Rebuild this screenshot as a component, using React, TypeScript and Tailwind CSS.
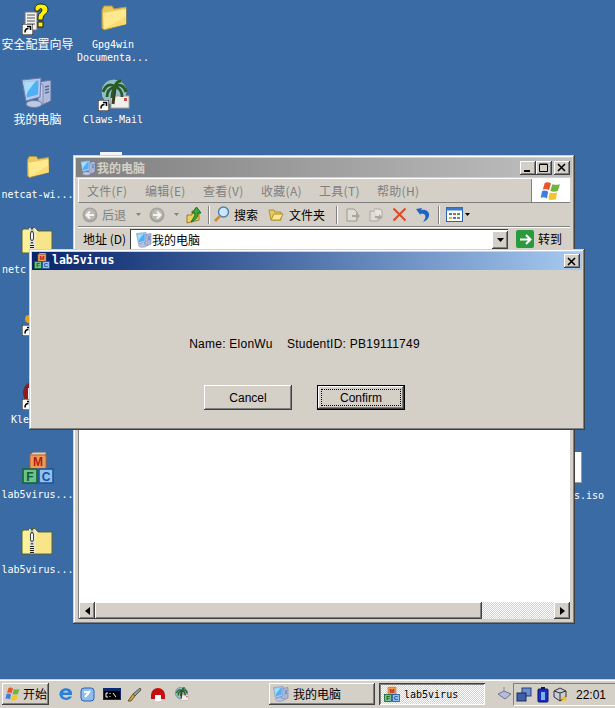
import React from 'react';

const CJK = "font-['Noto_Sans_CJK_SC','Liberation_Sans',sans-serif]";
const MONO = "font-['DejaVu_Sans_Mono','Noto_Sans_CJK_SC',monospace]";
const RAISED = 'bg-[#d4d0c8] shadow-[inset_-1px_-1px_0_#404040,inset_1px_1px_0_#ffffff,inset_-2px_-2px_0_#808080]';
const WINDOW = 'bg-[#d4d0c8] shadow-[inset_-1px_-1px_0_#404040,inset_1px_1px_0_#d4d0c8,inset_-2px_-2px_0_#808080,inset_2px_2px_0_#ffffff]';
const DITHER = 'bg-[repeating-conic-gradient(#d4d0c8_0_25%,#ffffff_0_50%)] bg-[length:2px_2px]';

function Shortcut() {
  return (
    <svg width="11" height="11" viewBox="0 0 11 11" className="absolute left-0 bottom-0">
      <rect width="11" height="11" fill="#fff" stroke="#000" />
      <path d="M3 8.5 C3 5.5 4.5 4.5 6.5 4.5 M5 2.5 H8.5 V6" fill="none" stroke="#000" strokeWidth="1.6" />
    </svg>
  );
}

function Computer({ size = 32 }: { size?: number }) {
  return (
    <svg width={size} height={size} viewBox="0 0 32 32">
      <path d="M17 5 L30 3 V24 L21 28 L17 25 Z" fill="#aebbdc" stroke="#5f70a0" />
      <path d="M17 5 L22 8 V28" fill="#c4cfe8" stroke="#7c8bb5" />
      <path d="M24 10 L28 9 M24 13 L28 12 M24 16 L28 15" stroke="#5a6a9c" strokeWidth="1.4" />
      <path d="M1 3 L20 1 L19 20 L5 24 Z" fill="#b9c9ea" stroke="#6b7dab" />
      <path d="M3.5 5 L17.5 3.5 L17 17.5 L6 20.5 Z" fill="#4fb0f6" />
      <path d="M3.5 5 L15 4 L7 14 L5 19 Z" fill="#a4e0fd" />
      <ellipse cx="13" cy="27" rx="8" ry="3.5" fill="#bcc9e4" stroke="#6b7dab" />
    </svg>
  );
}

function Folder({ size = 32 }: { size?: number }) {
  return (
    <svg width={size} height={size} viewBox="0 0 32 32">
      <path d="M4 8 L6 4 H14 L16 7 L28 5 V22 L6 28 L4 26 Z" fill="#e9c95d" stroke="#b99a3c" />
      <path d="M5 11 L28 7 V22 L6 27 Z" fill="#ffe98e" />
      <path d="M6 27 L28 22 V14 Z" fill="#fbdc72" />
    </svg>
  );
}

function ZipFolder() {
  return (
    <svg width="32" height="28" viewBox="0 0 32 28">
      <path d="M1 4 Q1 2 3 2 H9 L10 0.5 H14 L17 4 H30 Q31 4 31 5 V26 H1 Z" fill="#fdf29a" stroke="#57602f" />
      <path d="M15 5 H30 V25 H14 Z" fill="#f8e58a" />
      <rect x="8" y="1" width="6" height="24" fill="#e6e6d2" />
      <path d="M11 1 V17" stroke="#4b4b46" strokeWidth="2.4" strokeDasharray="1.6 1.2" />
      <path d="M11 18 V26" stroke="#222" strokeWidth="4" strokeDasharray="1 1" />
      <rect x="9.5" y="5" width="3" height="8" rx="1" fill="#f4f4ee" stroke="#444" />
    </svg>
  );
}

function Blocks({ size = 32 }: { size?: number }) {
  return (
    <svg width={size} height={size} viewBox="0 0 32 32">
      <path d="M8 3 L11 0.5 H24 L23 3 Z" fill="#f7c79a" />
      <rect x="8" y="3" width="16" height="14" fill="#f09a5a" stroke="#b0622c" />
      <text x="16" y="14" textAnchor="middle" fontSize="12" fontWeight="700" fill="#b01a14" fontFamily="Liberation Sans">M</text>
      <rect x="1" y="17" width="14" height="14" fill="#6fc08a" stroke="#16613a" strokeWidth="1.6" />
      <text x="8" y="28.5" textAnchor="middle" fontSize="12" fontWeight="700" fill="#0d5c33" fontFamily="Liberation Sans">F</text>
      <rect x="17" y="17" width="14" height="14" fill="#8ec2ee" stroke="#1f5596" strokeWidth="1.6" />
      <text x="24" y="28.5" textAnchor="middle" fontSize="12" fontWeight="700" fill="#1a4e9c" fontFamily="Liberation Sans">C</text>
    </svg>
  );
}

function ClawsMail({ size = 32 }: { size?: number }) {
  return (
    <svg width={size} height={size} viewBox="0 0 32 32">
      <circle cx="16" cy="13" r="13" fill="#8fc0cc" stroke="#3f6a78" />
      <rect x="13" y="17" width="18" height="12" fill="#f1efe9" stroke="#a9a49a" />
      <path d="M26 19 h3 v3 h-3z" fill="#cf4b4b" />
      <path d="M15 25 L17 9" stroke="#3b3a22" strokeWidth="3" />
      <path d="M17 8 C12 4 8 6 5 13 M17 8 C12 9 9 12 9 18 M17 8 C22 4 26 7 28 13 M17 8 C22 9 24 13 24 18 M17 8 C15 11 14 14 14 19 M17 8 C18 3 21 2 23 2" fill="none" stroke="#2a5a24" strokeWidth="2.8" />
    </svg>
  );
}

function HelpWizard() {
  return (
    <svg width="28" height="32" viewBox="0 0 28 32">
      <path d="M3 9 H15 V27 H3 Z" fill="#f1f1f1" stroke="#777" />
      <path d="M5 12 H13 M5 15 H13 M5 18 H13 M5 21 H13" stroke="#555" />
      <path d="M13 6 C13 2 16 1 19 1 C24 1 26 4 26 7 C26 11 21 11 21 15 V17 H16 V14 C16 10 20 10 20 7 C20 5 17 5 17 8 H13Z" fill="#fff200" stroke="#222" />
      <rect x="16" y="19" width="5" height="5" fill="#fff200" stroke="#222" />
    </svg>
  );
}

function DesktopLabel({ children, className }: { children: React.ReactNode; className: string }) {
  return <div className={`absolute text-center text-white whitespace-nowrap ${className}`}>{children}</div>;
}

function Desktop() {
  return (
    <>
      <div className="absolute left-[22px] top-[3px] w-[28px] h-[32px]">
        <HelpWizard />
        <Shortcut />
      </div>
      <DesktopLabel className={`left-0 w-[75px] top-[35px] text-[12px] leading-[17px] ${CJK}`}>安全配置向导</DesktopLabel>

      <div className="absolute left-[98px] top-[2px]"><Folder /></div>
      <DesktopLabel className={`left-[76px] w-[74px] top-[38px] text-[10px] leading-[13px] ${MONO}`}>
        Gpg4win<br />Documenta...
      </DesktopLabel>

      <div className="absolute left-[21px] top-[77px]"><Computer /></div>
      <DesktopLabel className={`left-0 w-[75px] top-[110px] text-[12px] leading-[17px] ${CJK}`}>我的电脑</DesktopLabel>

      <div className="absolute left-[98px] top-[79px] w-[32px] h-[32px]">
        <ClawsMail />
        <Shortcut />
      </div>
      <DesktopLabel className={`left-[76px] w-[74px] top-[114px] text-[10px] leading-[12px] ${MONO}`}>Claws-Mail</DesktopLabel>

      <div className="absolute left-[24px] top-[153px]"><Folder size={28} /></div>
      <DesktopLabel className={`left-0 w-[75px] top-[189px] text-[10px] leading-[12px] ${MONO}`}>netcat-wi...</DesktopLabel>

      <div className="absolute left-[21px] top-[227px]"><ZipFolder /></div>
      <DesktopLabel className={`left-[2px] top-[264px] text-[10px] leading-[12px] ${MONO}`}>netc</DesktopLabel>

      <div className="absolute left-[22px] top-[312px] w-[24px] h-[24px]">
        <div className="absolute left-[3px] top-[3px] w-[8px] h-[8px] rounded-full bg-[#e0a020]" />
        <Shortcut />
      </div>

      <div className="absolute left-[22px] top-[378px] w-[28px] h-[32px]">
        <div className="absolute left-[1px] top-[3px] w-[24px] h-[24px] rounded-full bg-[#8c1d1d]" />
        <div className="absolute left-[6px] top-[10px] w-[14px] h-[16px] bg-[#f0f0f0]" />
        <Shortcut />
      </div>
      <DesktopLabel className={`left-[11px] top-[414px] text-[10px] leading-[12px] ${MONO}`}>Kle</DesktopLabel>

      <div className="absolute left-[22px] top-[452px]"><Blocks /></div>
      <DesktopLabel className={`left-0 w-[75px] top-[489px] text-[10px] leading-[12px] ${MONO}`}>lab5virus...</DesktopLabel>

      <div className="absolute left-[21px] top-[528px]"><ZipFolder /></div>
      <DesktopLabel className={`left-0 w-[75px] top-[564px] text-[10px] leading-[12px] ${MONO}`}>lab5virus...</DesktopLabel>

      <div className="absolute left-[100px] top-[152px] w-[22px] h-[8px] bg-[#f4f4f4]" />

      <div className="absolute left-[566px] top-[452px] w-[16px] h-[31px] bg-white shadow-[inset_-1px_-1px_0_#9a9a9a]" />
      <DesktopLabel className={`left-[574px] top-[490px] text-[10px] leading-[12px] ${MONO}`}>s.iso</DesktopLabel>
    </>
  );
}

function WinFlag({ size = 16 }: { size?: number }) {
  return (
    <svg width={size} height={size} viewBox="0 0 32 32">
      <path d="M7 4 Q12 2 16 5 L13 15 Q9 12 4 14 Z" fill="#e8562a" />
      <path d="M18 6 Q23 8 29 6 L26 16 Q20 18 15 16 Z" fill="#72b43c" />
      <path d="M3 16 Q8 14 12 17 L10 27 Q6 24 1 26 Z" fill="#3f7ee0" />
      <path d="M14 18 Q20 20 25 18 L23 28 Q17 30 12 28 Z" fill="#f6c52c" />
    </svg>
  );
}

function CaptionButton({ kind }: { kind: 'min' | 'max' | 'close' }) {
  return (
    <div className={`w-[16px] h-[14px] flex items-center justify-center ${RAISED}`}>
      <svg width="10" height="9" viewBox="0 0 10 9">
        {kind === 'min' && <rect x="1" y="7" width="6" height="2" fill="#000" />}
        {kind === 'max' && <path d="M0.5 1.5 H8.5 V8.5 H0.5 Z M0.5 1 H8.5" fill="none" stroke="#000" />}
        {kind === 'close' && <path d="M1 1 L8 8 M8 1 L1 8" stroke="#000" strokeWidth="1.6" />}
      </svg>
    </div>
  );
}

function NavCircle({ dir }: { dir: 'back' | 'forward' }) {
  return (
    <svg width="16" height="16" viewBox="0 0 16 16">
      <circle cx="8" cy="8" r="7.5" fill="#a5a39d" />
      <circle cx="8" cy="7.5" r="5.5" fill="#bdbab3" />
      <path d={dir === 'back' ? 'M12 8 H5 M8 4.5 L4.5 8 L8 11.5' : 'M4 8 H11 M8 4.5 L11.5 8 L8 11.5'} fill="none" stroke="#f4f4f4" strokeWidth="2" />
    </svg>
  );
}

function SmallCaret({ className = '' }: { className?: string }) {
  return (
    <svg width="5" height="3" viewBox="0 0 5 3" className={className}>
      <path d="M0 0 H5 L2.5 3 Z" fill="#808080" />
    </svg>
  );
}

function Separator({ className = '' }: { className?: string }) {
  return <div className={`w-[2px] h-[18px] border-l border-[#808080] border-r border-r-white ${className}`} />;
}

function ExplorerWindow() {
  return (
    <div className={`absolute left-[73px] top-[155px] w-[502px] h-[469px] p-[3px] flex flex-col ${WINDOW}`}>
      {/* title bar */}
      <div className="h-[19px] flex items-center pl-[4px] pr-[2px] bg-gradient-to-r from-[#808080] to-[#c0c0c0] shrink-0">
        <Computer size={16} />
        <span className={`ml-[1px] text-[12px] font-bold text-[#d4d0c8] ${CJK}`}>我的电脑</span>
        <div className="ml-auto flex items-center">
          <CaptionButton kind="min" />
          <CaptionButton kind="max" />
          <div className="ml-[2px]"><CaptionButton kind="close" /></div>
        </div>
      </div>

      {/* menu */}
      <div className="mt-[1px] mx-[2px] h-[25px] flex shrink-0 border-t border-l border-white border-b border-b-[#808080]">
        <div className={`flex-1 flex items-center pl-[8px] text-[12px] tracking-[0.3px] text-[#808080] ${CJK}`}>
          {['文件(F)', '编辑(E)', '查看(V)', '收藏(A)', '工具(T)', '帮助(H)'].map(m => (
            <span key={m} className="w-[58px]">{m}</span>
          ))}
        </div>
        <div className="w-[39px] bg-white flex items-center justify-center border-l border-[#808080]">
          <WinFlag size={22} />
        </div>
      </div>

      {/* toolbar */}
      <div className={`mx-[2px] h-[24px] flex items-center pl-[4px] shrink-0 border-b border-[#808080] text-[12px] text-black ${CJK}`}>
        <NavCircle dir="back" />
        <span className="ml-[4px] text-[#808080]">后退</span>
        <SmallCaret className="ml-[10px]" />
        <div className="ml-[8px]"><NavCircle dir="forward" /></div>
        <SmallCaret className="ml-[9px]" />
        <svg width="16" height="18" viewBox="0 0 16 18" className="ml-[7px]">
          <path d="M1 9 H6 V5 H13 V14 L1 17 Z" fill="#f0cf5e" stroke="#9c7e27" />
          <path d="M5 16 C7 12 9 11 9 7 H6 L10.5 1 L15 7 H12 C12 11 10 14 5 16 Z" fill="#3fa63f" stroke="#1b6b1b" />
        </svg>
        <Separator className="ml-[6px]" />
        <svg width="17" height="17" viewBox="0 0 17 17" className="ml-[3px]">
          <circle cx="10.5" cy="6" r="5" fill="#cfe6f7" stroke="#4a7fb5" strokeWidth="1.4" />
          <path d="M7 10 L2 15" stroke="#c98a3a" strokeWidth="2.6" />
        </svg>
        <span className="ml-[4px]">搜索</span>
        <svg width="16" height="15" viewBox="0 0 16 15" className="ml-[10px]">
          <path d="M1 3 H6 L7 5 H13 V13 H3 Z" fill="#e9c95d" stroke="#b08f30" />
          <path d="M3 13 L6 7 H15 L12 13 Z" fill="#ffe98e" stroke="#b08f30" />
        </svg>
        <span className="ml-[5px]">文件夹</span>
        <Separator className="ml-[11px]" />
        <svg width="16" height="16" viewBox="0 0 16 16" className="ml-[7px]">
          <path d="M2 2 H9 L12 5 V14 H2 Z" fill="#dedbd3" stroke="#9a9a94" />
          <path d="M7 8 H11 V5 L15 9 L11 13 V10 H7 Z" fill="#a9a69e" />
        </svg>
        <svg width="16" height="16" viewBox="0 0 16 16" className="ml-[7px]">
          <path d="M2 4 H8 L10 6 V14 H2 Z" fill="#dedbd3" stroke="#a8a8a2" />
          <path d="M6 2 H12 L14 4 V11 H10" fill="#e8e5de" stroke="#a8a8a2" />
          <path d="M7 9 H11 V7 L14 10 L11 13 V11 H7 Z" fill="#a9a69e" />
        </svg>
        <svg width="15" height="15" viewBox="0 0 15 15" className="ml-[8px]">
          <path d="M1.5 1.5 L13.5 13.5 M13.5 1.5 L1.5 13.5" stroke="#dc4a22" strokeWidth="2" />
        </svg>
        <svg width="16" height="16" viewBox="0 0 16 16" className="ml-[8px]">
          <path d="M1 2 L7 1 L6 3 C11 2 15 5 14 9 C13.5 12 11 14 8 15 C10 12 11 10 10 8 C9 6.5 7 6.5 5 7 L6 9 Z" fill="#1f63c9" />
        </svg>
        <Separator className="ml-[7px]" />
        <svg width="17" height="15" viewBox="0 0 17 15" className="ml-[6px]">
          <rect x="0.5" y="0.5" width="16" height="14" fill="#fff" stroke="#2a63b0" />
          <rect x="0.5" y="0.5" width="16" height="3" fill="#3a78c8" />
          <path d="M3 6 h3 v2 h-3z" fill="#3a78c8" />
          <path d="M7 6 h3 v2 h-3z" fill="#d05a3c" />
          <path d="M11 6 h3 v2 h-3z" fill="#3f9a5f" />
          <path d="M3 10 h3 v2 h-3z" fill="#e0b030" />
          <path d="M7 10 h3 v2 h-3z" fill="#3a78c8" />
          <path d="M11 10 h3 v2 h-3z" fill="#808080" />
        </svg>
        <svg width="5" height="3" viewBox="0 0 5 3" className="ml-[2px]"><path d="M0 0 H5 L2.5 3 Z" fill="#000" /></svg>
      </div>

      {/* address */}
      <div className={`mx-[2px] h-[23px] flex items-center shrink-0 border-t border-white text-[12px] text-black ${CJK}`}>
        <span className="ml-[5px] w-[47px] shrink-0">地址 (D)</span>
        <div className="w-[378px] h-[21px] bg-white flex items-center pl-[5px] border-t border-l border-[#404040]">
          <Computer size={16} />
          <span>我的电脑</span>
          <div className={`ml-auto w-[16px] h-[18px] flex items-center justify-center ${RAISED}`}>
            <svg width="7" height="4" viewBox="0 0 7 4"><path d="M0 0 H7 L3.5 4 Z" fill="#000" /></svg>
          </div>
        </div>
        <div className="ml-[8px] w-[18px] h-[18px] rounded-[2px] bg-[#2a9a3e] flex items-center justify-center">
          <svg width="13" height="11" viewBox="0 0 13 11"><path d="M1 5.5 H11 M7 1 L11.5 5.5 L7 10" fill="none" stroke="#fff" strokeWidth="2" /></svg>
        </div>
        <span className="ml-[4px]">转到</span>
      </div>

      {/* content */}
      <div className="mx-[2px] mb-[2px] flex-1 flex flex-col border-t border-l border-[#808080] bg-white">
        <div className="flex-1" />
        <div className="h-[17px] flex bg-[#d4d0c8]">
          <div className={`w-[16px] h-[17px] flex items-center justify-center ${RAISED}`}>
            <svg width="5" height="8" viewBox="0 0 5 8"><path d="M5 0 V8 L0 4 Z" fill="#000" /></svg>
          </div>
          <div className={`w-[387px] ${RAISED}`} />
          <div className={`flex-1 ${DITHER}`} />
          <div className={`w-[16px] h-[17px] flex items-center justify-center ${RAISED}`}>
            <svg width="5" height="8" viewBox="0 0 5 8"><path d="M0 0 V8 L5 4 Z" fill="#000" /></svg>
          </div>
        </div>
      </div>
    </div>
  );
}

function Dialog() {
  return (
    <div className={`absolute left-[29px] top-[249px] w-[556px] h-[181px] p-[3px] flex flex-col ${WINDOW}`}>
      <div className="h-[18px] flex items-center pl-[2px] pr-[2px] bg-gradient-to-r from-[#0a246a] to-[#a6caf0] shrink-0">
        <Blocks size={16} />
        <span className={`ml-[2px] text-[11.5px] font-bold text-white ${MONO}`}>lab5virus</span>
        <div className="ml-auto"><CaptionButton kind="close" /></div>
      </div>
      <div className="flex-1 flex flex-col items-center font-['Liberation_Sans',sans-serif] text-[12px] text-black">
        <div className="mt-[66px] ml-[-5px] leading-[16px] tracking-[0.25px] whitespace-pre">Name: ElonWu    StudentID: PB19111749</div>
        <div className="mt-[33px] ml-[-5px] flex gap-[25px]">
          <div className={`w-[88px] h-[25px] flex items-center justify-center ${RAISED}`}>Cancel</div>
          <div className="w-[88px] h-[25px] border border-black">
            <div className={`h-full flex items-center justify-center ${RAISED}`}>
              <div className="w-[80px] h-[17px] flex items-center justify-center border border-dotted border-black">Confirm</div>
            </div>
          </div>
        </div>
      </div>
    </div>
  );
}

function Taskbar() {
  return (
    <div className="absolute left-0 bottom-0 w-[615px] h-[29px] flex items-center bg-[#d4d0c8] border-t border-[#d4d0c8] shadow-[inset_0_1px_0_#ffffff]">
      <div className={`ml-[2px] w-[47px] h-[22px] flex items-center pl-[3px] text-[12px] text-black ${CJK} ${RAISED}`}>
        <WinFlag size={16} />
        <span className="ml-[2px]">开始</span>
      </div>
      <svg width="16" height="16" viewBox="0 0 16 16" className="ml-[9px]">
        <path d="M14 9 H4.5 C5 12 9 12.5 11 10.5 H14 C12 15 3 15.5 1.5 9 C1 4 6 1.5 9.5 2.5 C13 3 14.5 6 14 9 Z M5 6.5 H10.5 C10 4 6 4 5 6.5 Z" fill="#2a7fd8" fillRule="evenodd" />
      </svg>
      <svg width="15" height="15" viewBox="0 0 15 15" className="ml-[6px]">
        <rect x="1" y="1" width="13" height="13" rx="3" fill="#8fbcea" stroke="#2a63b0" />
        <path d="M5 10 L10 4 M4 5 H9" stroke="#fff" strokeWidth="2" />
      </svg>
      <svg width="18" height="12" viewBox="0 0 18 12" className="ml-[8px]">
        <rect width="18" height="12" fill="#0b2a6b" />
        <rect x="1" y="3" width="16" height="8" fill="#000" />
        <path d="M5 5 H3 V9 H5 M7 5 V6 M7 8 V9 M10 5 L13 9" fill="none" stroke="#fff" />
      </svg>
      <svg width="16" height="16" viewBox="0 0 16 16" className="ml-[5px]">
        <path d="M2 15 L7 8 L9 10 L5 15 Z" fill="#d8a030" stroke="#6b5a20" />
        <path d="M7 8 L14 2 L15 4 L9 10 Z" fill="#9a9a9a" stroke="#555" />
      </svg>
      <svg width="16" height="15" viewBox="0 0 16 15" className="ml-[8px]">
        <path d="M1 8 A7 7 0 0 1 15 8 V12 H11 V14 H5 V12 H1 Z" fill="#c40f0f" />
        <rect x="5" y="8" width="6" height="6" fill="#fff" />
      </svg>
      <div className="ml-[8px]"><ClawsMail size={15} /></div>

      <div className={`absolute left-[269px] top-[3px] w-[106px] h-[22px] flex items-center pl-[4px] text-[12px] text-black ${CJK} ${RAISED}`}>
        <Computer size={16} />
        <span className="ml-[4px]">我的电脑</span>
      </div>
      <div className={`absolute left-[379px] top-[3px] w-[106px] h-[22px] flex items-center pl-[5px] text-[10px] text-black shadow-[inset_1px_1px_0_#404040,inset_-1px_-1px_0_#ffffff,inset_2px_2px_0_#808080] ${DITHER} ${MONO}`}>
        <Blocks size={16} />
        <span className="ml-[4px]">lab5virus</span>
      </div>

      <svg width="13" height="14" viewBox="0 0 13 14" className="absolute left-[498px] top-[6px]">
        <path d="M6 5 V1" stroke="#8a8a9a" />
        <path d="M0 8 L6 5 L13 8 L7 13 Z" fill="#b8bcd8" stroke="#6e7298" />
      </svg>
      <div className={`absolute left-[513px] top-[3px] w-[102px] h-[23px] flex items-center border-t border-l border-[#808080] border-b border-b-white text-[12px] text-black font-['Liberation_Sans',sans-serif]`}>
        <svg width="16" height="16" viewBox="0 0 16 16" className="ml-[2px]">
          <rect x="6" y="1" width="9" height="8" fill="#6b8fd0" stroke="#243a7a" />
          <rect x="1" y="6" width="9" height="8" fill="#3f5fa8" stroke="#1a2a60" />
        </svg>
        <svg width="12" height="16" viewBox="0 0 12 16" className="ml-[5px]">
          <rect x="1" y="2" width="10" height="13" rx="1" fill="#1a2fc0" stroke="#0a1460" />
          <rect x="4" y="0" width="4" height="2" fill="#0a1460" />
          <rect x="4" y="5" width="4" height="8" fill="#7fb0f0" />
        </svg>
        <svg width="15" height="15" viewBox="0 0 15 15" className="ml-[4px]">
          <path d="M7 1 L13 4 V10 L7 14 L1 10 V4 Z" fill="#c8ccd8" stroke="#333" />
          <path d="M7 6 V14 M1 4 L7 6 L13 4" fill="none" stroke="#333" />
          <path d="M11 8 L12.2 10.2 L14.6 10.4 L12.8 12 L13.4 14.4 L11 13 L8.8 14.4 L9.4 12 L7.6 10.4 L10 10.2 Z" fill="#f5c020" />
        </svg>
        <span className="ml-[8px]">22:01</span>
      </div>
    </div>
  );
}

export default function App() {
  return (
    <div className="relative w-[615px] h-[708px] overflow-hidden bg-[#3a6ba5]">
      <Desktop />
      <ExplorerWindow />
      <Dialog />
      <Taskbar />
    </div>
  );
}
